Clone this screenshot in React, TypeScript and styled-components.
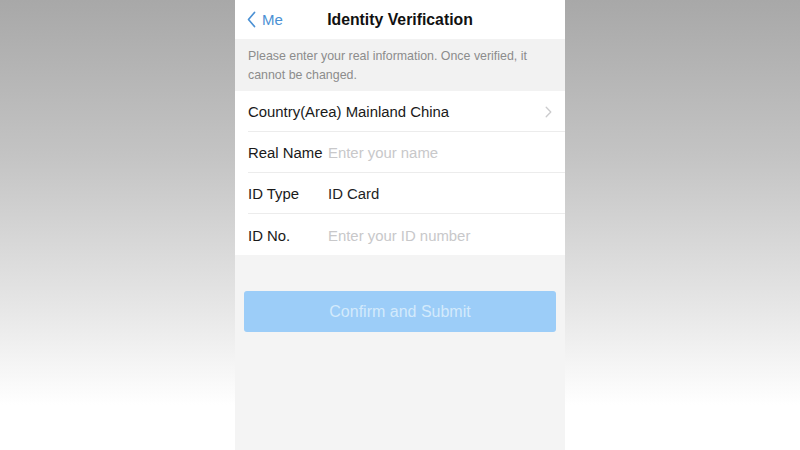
import * as React from 'react'
import styled, { createGlobalStyle } from 'styled-components'

const GlobalStyle = createGlobalStyle`
  html, body {
    margin: 0;
    padding: 0;
    height: 100%;
  }
  body {
    font-family: "Liberation Sans", Arial, sans-serif;
    background: linear-gradient(to bottom, #a8a8a8 0%, #c4c4c4 35%, #e6e6e6 68%, #ffffff 90%, #ffffff 100%);
    overflow: hidden;
  }
  #root {
    height: 100%;
  }
`

const Stage = styled.div`
  display: flex;
  justify-content: center;
  height: 450px;
`

const Screen = styled.div`
  width: 330px;
  height: 450px;
  background: #f4f4f4;
  display: flex;
  flex-direction: column;
`

const NavBar = styled.header`
  height: 39px;
  background: #ffffff;
  display: grid;
  grid-template-columns: 1fr auto 1fr;
  align-items: center;
  padding: 0 12px;
  box-sizing: border-box;
`

const BackButton = styled.button`
  display: flex;
  align-items: center;
  gap: 6px;
  border: 0;
  background: none;
  padding: 0;
  color: #4b91d4;
  font: 15px "Liberation Sans", Arial, sans-serif;
  justify-self: start;
  cursor: pointer;
`

const Title = styled.h1`
  margin: 0;
  font-size: 15.8px;
  font-weight: bold;
  color: #111111;
`

const Notice = styled.p`
  margin: 0;
  padding: 8px 30px 6px 13px;
  font-size: 12.4px;
  line-height: 19px;
  color: #8c8c8c;
  background: #f2f2f2;
`

const List = styled.div`
  background: #ffffff;
  padding-left: 13px;
`

const Row = styled.div<{ last?: boolean }>`
  height: 41px;
  display: flex;
  align-items: center;
  padding: 2px 13px 0 0;
  border-bottom: ${({ last }) => (last ? 'none' : '1px solid #ececec')};
  box-sizing: border-box;
  font-size: 14.9px;
`

const Label = styled.span`
  width: 80px;
  flex-shrink: 0;
  color: #1a1a1a;
  white-space: nowrap;
`

const Value = styled.span<{ placeholder?: boolean }>`
  flex: 1;
  color: ${({ placeholder }) => (placeholder ? '#c8c8ca' : '#1f1f1f')};
`

const CountryText = styled.span`
  flex: 1;
  color: #1a1a1a;
`

const Footer = styled.div`
  padding: 36px 9px 0;
`

const SubmitButton = styled.button`
  width: 100%;
  height: 41px;
  border: 0;
  border-radius: 3px;
  background: #9ccdf8;
  color: #d3eafc;
  font: 16px "Liberation Sans", Arial, sans-serif;
  padding-top: 2px;
`

const ChevronLeft = () => (
  <svg width="9" height="17" viewBox="0 0 9 17" fill="none">
    <path d="M7.5 1.5 L1.5 8.5 L7.5 15.5" stroke="#4b91d4" strokeWidth="1.7" strokeLinecap="round" strokeLinejoin="round" />
  </svg>
)

const ChevronRight = () => (
  <svg width="7" height="12" viewBox="0 0 7 12" fill="none">
    <path d="M1.2 1.2 L5.8 6 L1.2 10.8" stroke="#cbcbcd" strokeWidth="1.3" strokeLinecap="round" strokeLinejoin="round" />
  </svg>
)

export default function App() {
  return (
    <Stage>
      <GlobalStyle />
      <Screen>
        <NavBar>
          <BackButton>
            <ChevronLeft />
            Me
          </BackButton>
          <Title>Identity Verification</Title>
          <span />
        </NavBar>
        <Notice>Please enter your real information. Once verified, it cannot be changed.</Notice>
        <List>
          <Row>
            <CountryText>Country(Area) Mainland China</CountryText>
            <ChevronRight />
          </Row>
          <Row>
            <Label>Real Name</Label>
            <Value placeholder>Enter your name</Value>
          </Row>
          <Row>
            <Label>ID Type</Label>
            <Value>ID Card</Value>
          </Row>
          <Row last>
            <Label>ID No.</Label>
            <Value placeholder>Enter your ID number</Value>
          </Row>
        </List>
        <Footer>
          <SubmitButton disabled>Confirm and Submit</SubmitButton>
        </Footer>
      </Screen>
    </Stage>
  )
}
